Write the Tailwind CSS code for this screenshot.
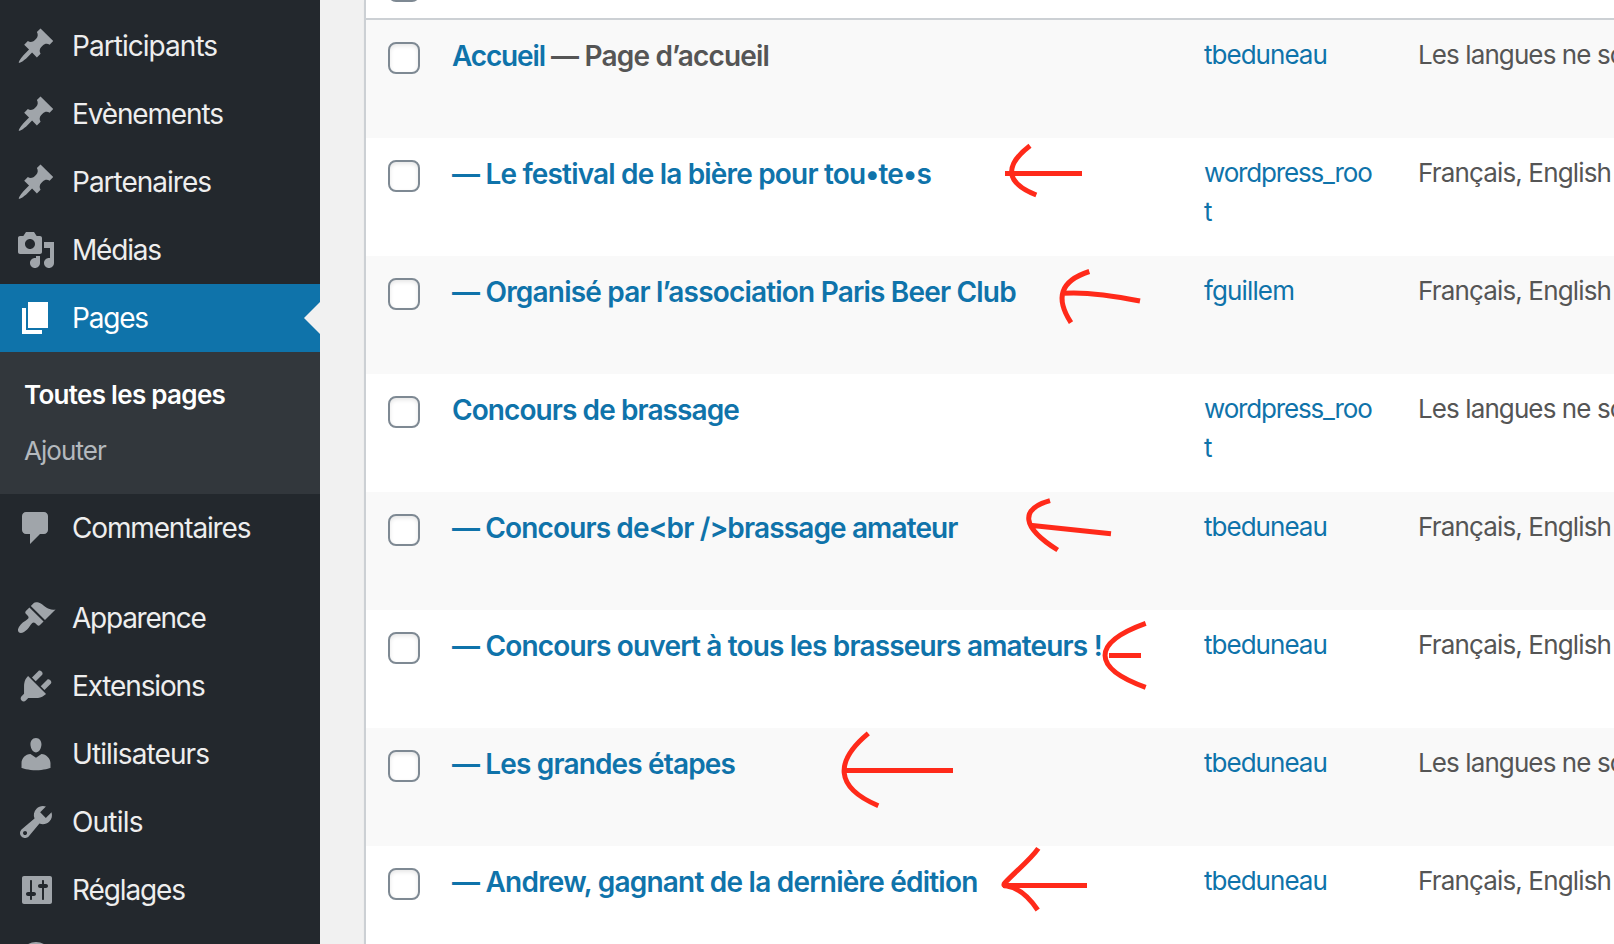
<!DOCTYPE html>
<html lang="fr">
<head>
<meta charset="utf-8">
<title>Pages</title>
<script src="https://cdn.jsdelivr.net/npm/@tailwindcss/browser@4"></script>
</head>
<body class="relative h-[944px] w-[1614px] overflow-hidden bg-[#f1f1f1] font-[Inter,sans-serif]">
<svg class="hidden">
  <symbol id="pin" viewBox="0 0 20 20"><path d="M10.44 3.02l1.82-1.82 6.36 6.35-1.83 1.82c-1.05-.68-2.48-.57-3.41.36l-.75.75c-.92.93-1.04 2.35-.35 3.41l-1.83 1.82-2.41-2.41-2.8 2.79c-.42.42-3.38 2.71-3.8 2.29s1.86-3.39 2.28-3.81l2.79-2.79L4.1 9.36l1.83-1.82c1.05.69 2.48.57 3.4-.36l.75-.75c.93-.92 1.05-2.35.36-3.41z"/></symbol>
</svg>
<div class="flex h-full overflow-hidden">
  <nav class="flex w-[320px] shrink-0 flex-col overflow-hidden bg-[#23282d] pt-3 text-[28px] leading-9 whitespace-nowrap text-[#eee]">
    <a class="flex h-[68px] shrink-0 items-center pl-4"><svg class="mr-4 size-10 fill-[#a0a5aa]"><use href="#pin"/></svg><span class="tracking-[-0.96px]">Participants</span></a>
    <a class="flex h-[68px] shrink-0 items-center pl-4"><svg class="mr-4 size-10 fill-[#a0a5aa]"><use href="#pin"/></svg><span class="tracking-[-1.15px]">Evènements</span></a>
    <a class="flex h-[68px] shrink-0 items-center pl-4"><svg class="mr-4 size-10 fill-[#a0a5aa]"><use href="#pin"/></svg><span class="tracking-[-1px]">Partenaires</span></a>
    <a class="flex h-[68px] shrink-0 items-center pl-4"><svg class="mr-4 size-10 fill-[#a0a5aa]" viewBox="0 0 20 20"><path d="M13 11V4c0-.55-.45-1-1-1h-1.67L9 1H5L3.67 3H2c-.55 0-1 .45-1 1v7c0 .55.45 1 1 1h10c.55 0 1-.45 1-1zM7 4.5c1.38 0 2.5 1.12 2.5 2.5S8.38 9.5 7 9.5 4.5 8.38 4.5 7 5.62 4.5 7 4.5zM14 6h5v10.5c0 1.38-1.12 2.5-2.5 2.5S14 17.88 14 16.5s1.12-2.5 2.5-2.5c.17 0 .34.02.5.05V9h-3V6zm-4 8.05V13h2v3.5c0 1.38-1.12 2.5-2.5 2.5S7 17.88 7 16.5 8.12 14 9.5 14c.17 0 .34.02.5.05z"/></svg><span class="tracking-[-1.2px]">Médias</span></a>
    <a class="flex h-[68px] shrink-0 items-center bg-[#0f73aa] pl-4 text-white"><svg class="mr-4 size-10 fill-white" viewBox="0 0 20 20"><path d="M6 15V2h10v13H6zm-1 1h8v2H3V5h2v11z"/></svg><span class="tracking-[-1.2px]">Pages</span><svg class="ml-auto h-8 w-4 fill-[#f1f1f1]" viewBox="0 0 16 32"><path d="M16 0v32L0 16z"/></svg></a>
    <div class="flex shrink-0 flex-col bg-[#32373c] pt-[15px] pb-[15px] pl-6 text-[26px]">
      <a class="py-[10px] font-semibold tracking-[-0.7px] text-white">Toutes les pages</a>
      <a class="py-[10px] tracking-[-0.95px] text-[#b4b9be]">Ajouter</a>
    </div>
    <a class="mb-[22px] flex h-[68px] shrink-0 items-center pl-4"><svg class="mr-4 size-10 fill-[#a0a5aa]" viewBox="0 0 20 20"><path d="M5 2h9c1.1 0 2 .9 2 2v7c0 1.1-.9 2-2 2h-2l-5 5v-5H5c-1.1 0-2-.9-2-2V4c0-1.1.9-2 2-2z"/></svg><span class="tracking-[-1.15px]">Commentaires</span></a>
    <a class="flex h-[68px] shrink-0 items-center pl-4"><svg class="mr-4 size-10 fill-[#a0a5aa]" viewBox="0 0 20 20"><path d="M14.48 11.06L7.41 3.99l1.5-1.5c.5-.56 2.3-.47 3.51.32 1.21.8 1.43 1.28 2.91 2.1 1.18.64 2.45 1.26 4.45.85zm-.71.71L6.7 4.7 4.93 6.47c-.39.39-.39 1.02 0 1.41l1.06 1.06c.39.39.39 1.03 0 1.42-.6.6-1.43 1.11-2.21 1.69-.35.26-.7.53-1.01.84C1.43 14.23.4 16.08 1.4 17.07c.99 1 2.84-.03 4.18-1.36.31-.31.58-.66.85-1.02.57-.78 1.08-1.61 1.69-2.21.39-.39 1.02-.39 1.41 0l1.06 1.06c.39.39 1.02.39 1.41 0z"/></svg><span class="tracking-[-1.25px]">Apparence</span></a>
    <a class="flex h-[68px] shrink-0 items-center pl-4"><svg class="mr-4 size-10 fill-[#a0a5aa]" viewBox="0 0 20 20"><path d="M13.11 4.36L9.87 7.6 8 5.73l3.24-3.24c.35-.34 1.05-.2 1.56.32.52.51.66 1.21.31 1.55zm-8 1.77l.91-1.12 9.01 9.01-1.19.84c-.71.71-2.63 1.16-3.82 1.16H6.14L4.9 17.26c-.59.59-1.54.59-2.12 0-.59-.58-.59-1.53 0-2.12l1.24-1.24v-3.88c0-1.13.4-3.19 1.09-3.89zm7.26 3.97l3.24-3.24c.34-.35 1.04-.21 1.55.31.52.51.66 1.21.31 1.55l-3.24 3.25z"/></svg><span class="tracking-[-1.15px]">Extensions</span></a>
    <a class="flex h-[68px] shrink-0 items-center pl-4"><svg class="mr-4 size-10 fill-[#a0a5aa]" viewBox="0 0 20 20"><path d="M10 9.25c-2.27 0-2.73-3.44-2.73-3.44C7 4.02 7.82 2 9.97 2c2.16 0 2.98 2.02 2.71 3.81 0 0-.41 3.44-2.68 3.44zm0 2.57L12.72 10c2.39 0 4.52 2.33 4.52 4.53v2.49s-3.65 1.13-7.24 1.13c-3.65 0-7.24-1.13-7.24-1.13v-2.49c0-2.25 1.94-4.48 4.47-4.48z"/></svg><span class="tracking-[-0.9px]">Utilisateurs</span></a>
    <a class="flex h-[68px] shrink-0 items-center pl-4"><svg class="mr-4 size-10 fill-[#a0a5aa]" viewBox="0 0 20 20"><path d="M16.68 9.77c-1.34 1.34-3.3 1.67-4.95.99l-5.41 6.52c-.99.99-2.59.99-3.58 0s-.99-2.59 0-3.57l6.52-5.42c-.68-1.65-.35-3.61.99-4.95 1.28-1.28 3.12-1.62 4.72-1.06l-2.89 2.89 2.82 2.82 2.86-2.87c.53 1.58.18 3.39-1.08 4.65zM3.81 16.21c.4.39 1.04.39 1.43 0 .4-.4.4-1.04 0-1.43-.39-.4-1.03-.4-1.43 0-.39.39-.39 1.03 0 1.43z"/></svg><span class="tracking-[-0.8px]">Outils</span></a>
    <a class="flex h-[68px] shrink-0 items-center pl-4"><svg class="mr-4 size-10 fill-[#a0a5aa]" viewBox="0 0 20 20"><path d="M18 16V4c0-.55-.45-1-1-1H4c-.55 0-1 .45-1 1v12c0 .55.45 1 1 1h13c.55 0 1-.45 1-1zM8 11h1c.55 0 1 .45 1 1s-.45 1-1 1H8v1.5c0 .28-.22.5-.5.5s-.5-.22-.5-.5V13H6c-.55 0-1-.45-1-1s.45-1 1-1h1V5.5c0-.28.22-.5.5-.5s.5.22.5.5V11zm5-2h-1c-.55 0-1-.45-1-1s.45-1 1-1h1V5.5c0-.28.22-.5.5-.5s.5.22.5.5V7h1c.55 0 1 .45 1 1s-.45 1-1 1h-1v5.5c0 .28-.22.5-.5.5s-.5-.22-.5-.5V9z"/></svg><span class="tracking-[-1.12px]">Réglages</span></a>
    <a class="flex h-5 shrink-0 items-start overflow-hidden pt-[14px] pl-4"><svg class="size-10 shrink-0 fill-[#a0a5aa]" viewBox="0 0 20 20"><circle cx="10" cy="10" r="8"/></svg></a>
  </nav>

  <main class="ml-11 flex w-[1250px] shrink-0 flex-col overflow-hidden border-l-2 border-[#ccd0d4] bg-white leading-[39px] whitespace-nowrap text-[#555] shadow-[0_2px_2px_rgba(0,0,0,0.04)]">
    <div class="flex h-5 shrink-0 items-end border-b-2 border-[#ccd0d4] pb-4 pl-[22px]"><span class="h-8 w-8 shrink-0 rounded-lg border-2 border-[#7e8993] bg-white"></span></div>

    <div class="flex h-[118px] shrink-0 bg-[#f9f9f9] pt-[15px] pl-[22px]">
      <span class="mt-[7px] mr-8 size-8 shrink-0 rounded-lg border-2 border-[#7e8993] bg-white shadow-[inset_0_2px_4px_rgba(0,0,0,0.1)]"></span>
      <strong class="w-[752px] shrink-0 text-[28px] leading-[42px] font-semibold"><span class="tracking-[-1.15px] text-[#0f73aa]">Accueil</span><span class="tracking-[-0.83px]"> — Page d’accueil</span></strong>
      <span class="w-[214px] shrink-0 text-[26px] tracking-[-0.97px] text-[#0f73aa]">tbeduneau</span>
      <span class="text-[26px] tracking-[-0.9px]">Les langues ne sont</span>
    </div>
    <div class="flex h-[118px] shrink-0 pt-[15px] pl-[22px]">
      <span class="mt-[7px] mr-8 size-8 shrink-0 rounded-lg border-2 border-[#7e8993] bg-white shadow-[inset_0_2px_4px_rgba(0,0,0,0.1)]"></span>
      <strong class="w-[752px] shrink-0 text-[28px] leading-[42px] font-semibold tracking-[-0.82px] text-[#0f73aa]">— Le festival de la bière pour tou•te•s</strong>
      <span class="w-[214px] shrink-0 text-[26px] tracking-[-1.17px] text-[#0f73aa]">wordpress_roo<br>t</span>
      <span class="text-[26px] tracking-[-0.85px]">Français, English</span>
    </div>
    <div class="flex h-[118px] shrink-0 bg-[#f9f9f9] pt-[15px] pl-[22px]">
      <span class="mt-[7px] mr-8 size-8 shrink-0 rounded-lg border-2 border-[#7e8993] bg-white shadow-[inset_0_2px_4px_rgba(0,0,0,0.1)]"></span>
      <strong class="w-[752px] shrink-0 text-[28px] leading-[42px] font-semibold tracking-[-0.81px] text-[#0f73aa]">— Organisé par l’association Paris Beer Club</strong>
      <span class="w-[214px] shrink-0 text-[26px] tracking-[-0.87px] text-[#0f73aa]">fguillem</span>
      <span class="text-[26px] tracking-[-0.85px]">Français, English</span>
    </div>
    <div class="flex h-[118px] shrink-0 pt-[15px] pl-[22px]">
      <span class="mt-[7px] mr-8 size-8 shrink-0 rounded-lg border-2 border-[#7e8993] bg-white shadow-[inset_0_2px_4px_rgba(0,0,0,0.1)]"></span>
      <strong class="w-[752px] shrink-0 text-[28px] leading-[42px] font-semibold tracking-[-0.92px] text-[#0f73aa]">Concours de brassage</strong>
      <span class="w-[214px] shrink-0 text-[26px] tracking-[-1.17px] text-[#0f73aa]">wordpress_roo<br>t</span>
      <span class="text-[26px] tracking-[-0.9px]">Les langues ne sont</span>
    </div>
    <div class="flex h-[118px] shrink-0 bg-[#f9f9f9] pt-[15px] pl-[22px]">
      <span class="mt-[7px] mr-8 size-8 shrink-0 rounded-lg border-2 border-[#7e8993] bg-white shadow-[inset_0_2px_4px_rgba(0,0,0,0.1)]"></span>
      <strong class="w-[752px] shrink-0 text-[28px] leading-[42px] font-semibold tracking-[-0.87px] text-[#0f73aa]">— Concours de&lt;br /&gt;brassage amateur</strong>
      <span class="w-[214px] shrink-0 text-[26px] tracking-[-0.97px] text-[#0f73aa]">tbeduneau</span>
      <span class="text-[26px] tracking-[-0.85px]">Français, English</span>
    </div>
    <div class="flex h-[118px] shrink-0 pt-[15px] pl-[22px]">
      <span class="mt-[7px] mr-8 size-8 shrink-0 rounded-lg border-2 border-[#7e8993] bg-white shadow-[inset_0_2px_4px_rgba(0,0,0,0.1)]"></span>
      <strong class="w-[752px] shrink-0 text-[28px] leading-[42px] font-semibold tracking-[-0.83px] text-[#0f73aa]">— Concours ouvert à tous les brasseurs amateurs !</strong>
      <span class="w-[214px] shrink-0 text-[26px] tracking-[-0.97px] text-[#0f73aa]">tbeduneau</span>
      <span class="text-[26px] tracking-[-0.85px]">Français, English</span>
    </div>
    <div class="flex h-[118px] shrink-0 bg-[#f9f9f9] pt-[15px] pl-[22px]">
      <span class="mt-[7px] mr-8 size-8 shrink-0 rounded-lg border-2 border-[#7e8993] bg-white shadow-[inset_0_2px_4px_rgba(0,0,0,0.1)]"></span>
      <strong class="w-[752px] shrink-0 text-[28px] leading-[42px] font-semibold tracking-[-0.85px] text-[#0f73aa]">— Les grandes étapes</strong>
      <span class="w-[214px] shrink-0 text-[26px] tracking-[-0.97px] text-[#0f73aa]">tbeduneau</span>
      <span class="text-[26px] tracking-[-0.9px]">Les langues ne sont</span>
    </div>
    <div class="flex h-[98px] shrink-0 pt-[15px] pl-[22px]">
      <span class="mt-[7px] mr-8 size-8 shrink-0 rounded-lg border-2 border-[#7e8993] bg-white shadow-[inset_0_2px_4px_rgba(0,0,0,0.1)]"></span>
      <strong class="w-[752px] shrink-0 text-[28px] leading-[42px] font-semibold tracking-[-0.78px] text-[#0f73aa]">— Andrew, gagnant de la dernière édition</strong>
      <span class="w-[214px] shrink-0 text-[26px] tracking-[-0.97px] text-[#0f73aa]">tbeduneau</span>
      <span class="text-[26px] tracking-[-0.85px]">Français, English</span>
    </div>
  </main>
</div>

<!-- Hand-drawn annotation arrows -->
<svg class="pointer-events-none absolute inset-0" width="1614" height="944" fill="none" stroke="#ff2a1a" stroke-width="5">
  <path d="M1030 145.7C1006 164 1003 182 1036.3 195M1005 173.5H1082"/>
  <path d="M1089.3 271.5C1060 281 1055 298 1071 322.7M1063 293.3C1085 291.5 1110 295 1140 301"/>
  <path d="M1050 500.7C1020 509 1021 527 1057.7 550M1030 525.3L1111 533.7"/>
  <path d="M1145.7 623.3C1091 643 1092 668 1145.7 687.3M1109 655.5H1141"/>
  <path d="M868.3 733.3C835 761 834 787 878.3 805.7M844 770.5H953"/>
  <path d="M1038.3 848.3C1031 859 1015 872 1005 882.7C1003 885 1004 886 1007 886C1019 888 1029 897 1037.7 910M1003 885.5H1087"/>
</svg>
</body>
</html>
